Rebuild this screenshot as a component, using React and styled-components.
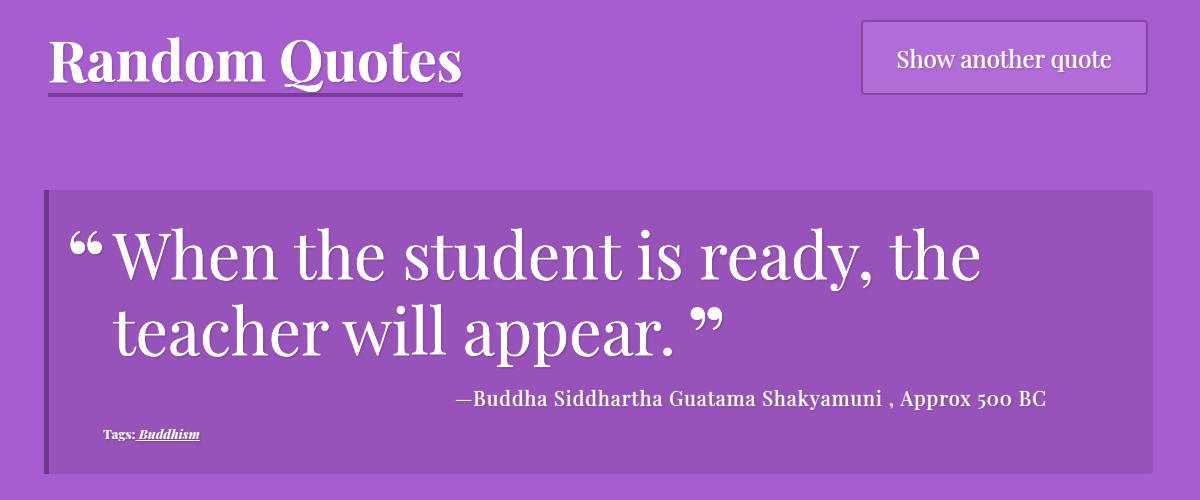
import React from "react";
import styled, { createGlobalStyle } from "styled-components";

const GlobalStyle = createGlobalStyle`
  * { box-sizing: border-box; }
  body {
    margin: 0;
    background: #a75dcf;
    color: #fff;
    font-family: "Playfair Display", "Liberation Serif", serif;
    text-shadow: 0 0 1px #fff, 1px 1px 2px rgba(0, 0, 0, 0.3);
  }
`;

const Page = styled.div`
  padding: 20px 47px 26px 44px;
`;

const Header = styled.header`
  display: flex;
  justify-content: space-between;
  align-items: flex-start;
  padding: 0 5px 0 4px;
`;

const Title = styled.h1`
  margin: 0;
  padding: 5px 0 0;
  border-bottom: 4px solid #773f94;
  font-size: 56px;
  line-height: 68px;
  font-weight: 700;
`;

const QuoteButton = styled.button`
  padding: 0 34px;
  height: 75px;
  border: 2px solid #86489f;
  border-radius: 4px;
  background: #b26cd8;
  color: inherit;
  font: inherit;
  font-size: 24px;
  text-shadow: inherit;
  cursor: pointer;
`;

const QuoteBox = styled.main`
  margin-top: 93px;
  padding: 25px 106px 31px 20px;
  border-left: 5px solid #6c3a88;
  border-radius: 0 4px 4px 0;
  background: #9853ba;
`;

const Quote = styled.blockquote`
  margin: 0;
  padding-left: 44px;
  font-size: 64px;
  line-height: 76px;
`;

const Mark = styled.span`
  font-size: 82px;
  line-height: 20px;
  font-weight: 700;
  vertical-align: -12px;
`;

const OpeningMark = styled(Mark)`
  display: inline-block;
  width: 46px;
  margin-left: -46px;
`;

const ClosingMark = styled(Mark)`
  margin-left: 12px;
`;

const Source = styled.p`
  margin: 17px 0 0;
  font-size: 20px;
  line-height: 28px;
  letter-spacing: 1px;
  text-align: right;
`;

const Tags = styled.p`
  margin: 13px 0 0 34px;
  font-size: 13px;
  line-height: 18px;
  font-weight: 800;
  text-shadow: 1px 1px 2px rgba(0, 0, 0, 0.3);
`;

const Tag = styled.a`
  color: inherit;
  font-style: italic;
`;

export default function App() {
  return (
    <>
      <GlobalStyle />
      <Page>
        <Header>
          <Title>Random Quotes</Title>
          <QuoteButton type="button">Show another quote</QuoteButton>
        </Header>
        <QuoteBox>
          <Quote>
            <OpeningMark>“</OpeningMark>When the student is ready, the teacher will appear.<ClosingMark>”</ClosingMark>
          </Quote>
          <Source>—Buddha Siddhartha Guatama Shakyamuni , Approx 500 BC</Source>
          <Tags>Tags:<Tag href="#buddhism"> Buddhism</Tag></Tags>
        </QuoteBox>
      </Page>
    </>
  );
}
